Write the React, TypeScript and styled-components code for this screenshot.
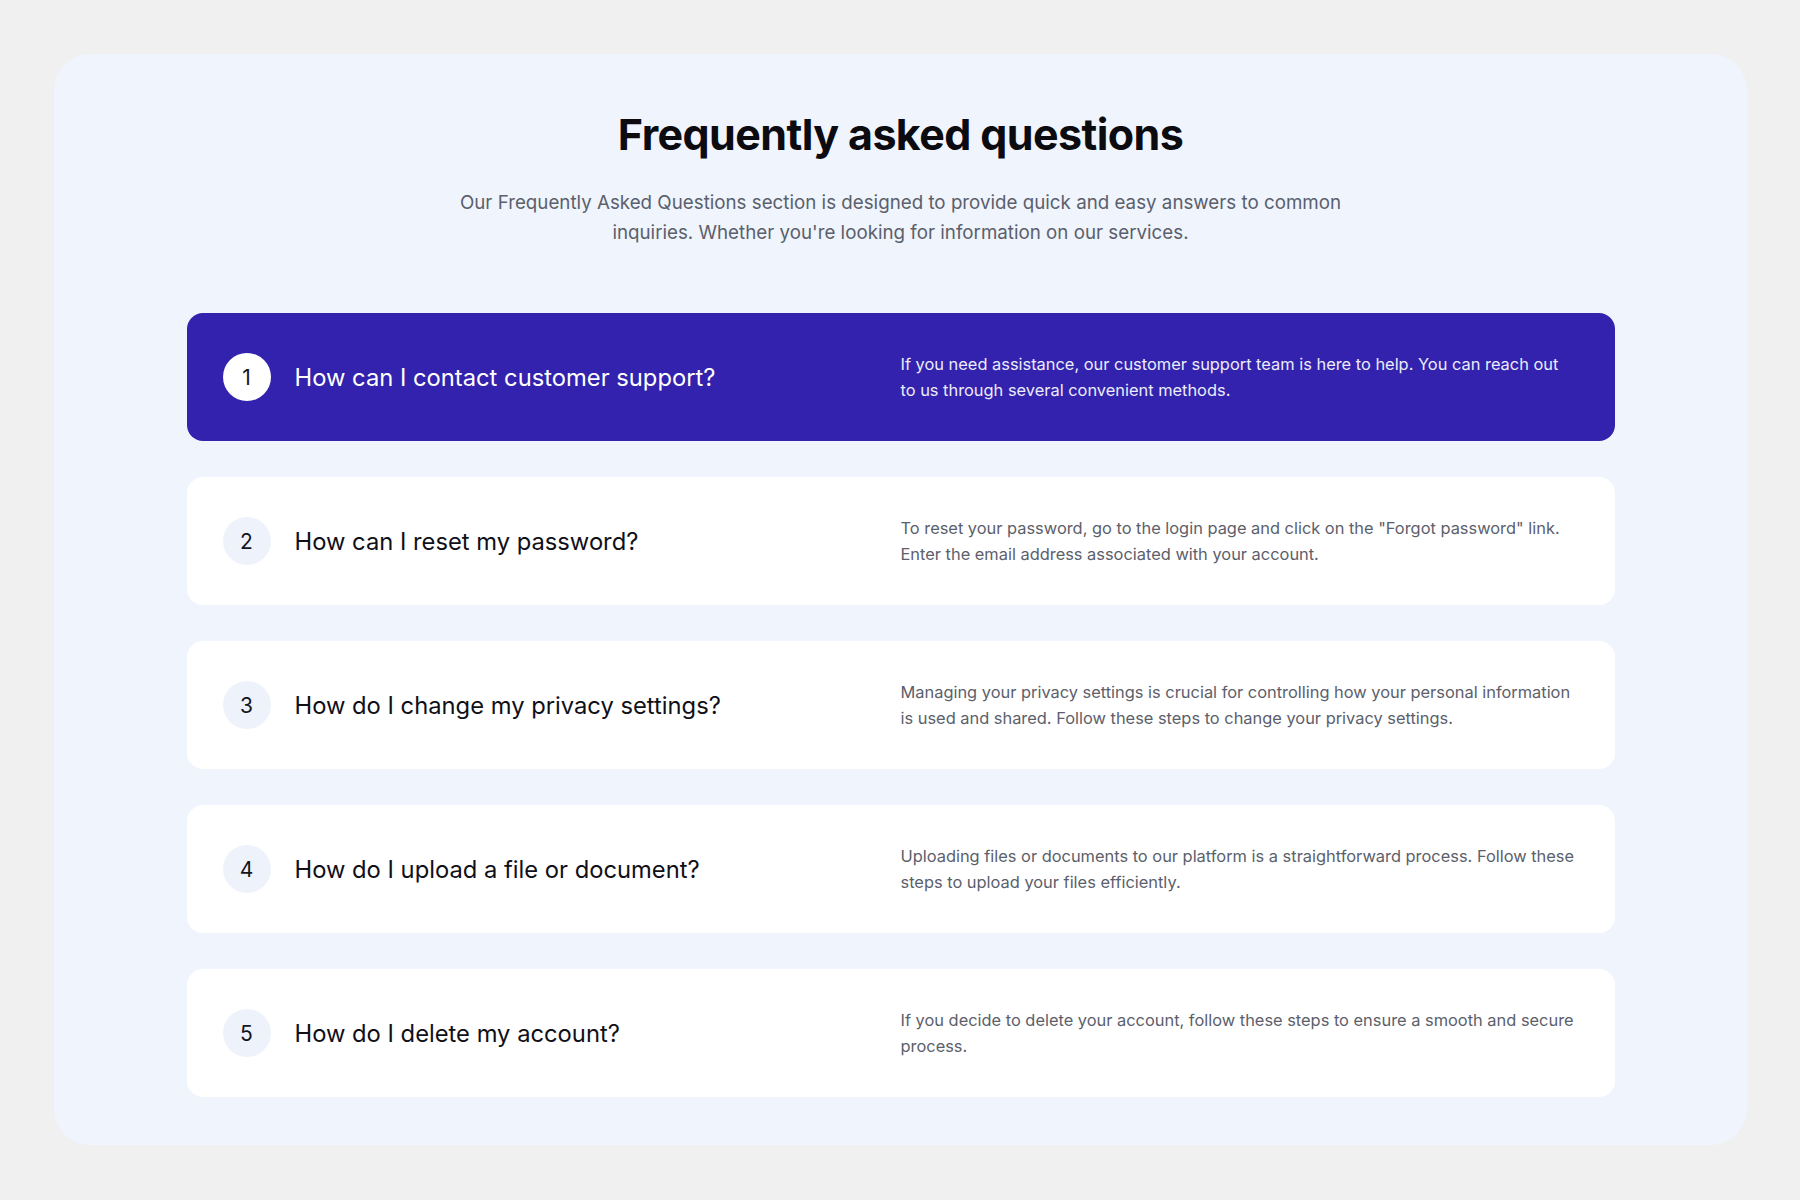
import styled, { createGlobalStyle } from 'styled-components';

const GlobalStyle = createGlobalStyle`
    html, body {
        margin: 0;
        padding: 0;
        background: #f0f0f0;
        font-family: Inter, 'Noto Sans', sans-serif;
        -webkit-font-smoothing: antialiased;
    }
`;

const Page = styled.div`
    padding: 54px 53px 55px 54px;
`;

const Panel = styled.section`
    background: #eff4fd;
    border-radius: 36px;
    padding: 52px 0 48px;
    display: flex;
    flex-direction: column;
    align-items: center;
`;

const Title = styled.h1`
    margin: 0;
    font-size: 43px;
    line-height: 56px;
    font-weight: 700;
    letter-spacing: -0.6px;
    color: #0b0b10;
`;

const Subtitle = styled.p`
    margin: 26px 0 0;
    max-width: 900px;
    text-align: center;
    font-size: 18.75px;
    line-height: 30px;
    color: #5b606b;
`;

const List = styled.div`
    margin-top: 65px;
    width: 1428px;
    display: flex;
    flex-direction: column;
    gap: 36px;
`;

const Item = styled.div<{ $active?: boolean }>`
    height: 128px;
    box-sizing: border-box;
    padding: 0 36px;
    border-radius: 16px;
    background: ${(p) => (p.$active ? '#3222ad' : '#ffffff')};
    display: grid;
    grid-template-columns: 1fr 1fr;
    align-items: center;
`;

const QuestionWrap = styled.div`
    display: flex;
    align-items: center;
    gap: 24px;
`;

const Badge = styled.span<{ $active?: boolean }>`
    width: 48px;
    height: 48px;
    flex-shrink: 0;
    border-radius: 50%;
    background: ${(p) => (p.$active ? '#ffffff' : '#eef2fb')};
    color: #14141c;
    font-size: 21px;
    display: flex;
    align-items: center;
    justify-content: center;
`;

const Question = styled.h3<{ $active?: boolean }>`
    margin: 0;
    font-size: 23.75px;
    font-weight: 400;
    color: ${(p) => (p.$active ? '#ffffff' : '#101018')};
`;

const Answer = styled.p<{ $active?: boolean }>`
    margin: 0;
    padding-right: 2px;
    font-size: 16.4px;
    line-height: 26px;
    color: ${(p) => (p.$active ? '#ececfb' : '#5b606b')};
`;

const faqs = [
    {
        q: 'How can I contact customer support?',
        a: 'If you need assistance, our customer support team is here to help. You can reach out to us through several convenient methods.',
    },
    {
        q: 'How can I reset my password?',
        a: 'To reset your password, go to the login page and click on the "Forgot password" link. Enter the email address associated with your account.',
    },
    {
        q: 'How do I change my privacy settings?',
        a: 'Managing your privacy settings is crucial for controlling how your personal information is used and shared. Follow these steps to change your privacy settings.',
    },
    {
        q: 'How do I upload a file or document?',
        a: 'Uploading files or documents to our platform is a straightforward process. Follow these steps to upload your files efficiently.',
    },
    {
        q: 'How do I delete my account?',
        a: 'If you decide to delete your account, follow these steps to ensure a smooth and secure process.',
    },
];

const App = () => {
    const activeIndex = 0;

    return (
        <Page>
            <GlobalStyle />
            <Panel>
                <Title>Frequently asked questions</Title>
                <Subtitle>
                    Our Frequently Asked Questions section is designed to provide quick and easy
                    answers to common inquiries. Whether you're looking for information on our
                    services.
                </Subtitle>

                <List>
                    {faqs.map((item, i) => {
                        const active = i === activeIndex;
                        return (
                            <Item key={item.q} $active={active}>
                                <QuestionWrap>
                                    <Badge $active={active}>{i + 1}</Badge>
                                    <Question $active={active}>{item.q}</Question>
                                </QuestionWrap>
                                <Answer $active={active}>{item.a}</Answer>
                            </Item>
                        );
                    })}
                </List>
            </Panel>
        </Page>
    );
};

export default App;
